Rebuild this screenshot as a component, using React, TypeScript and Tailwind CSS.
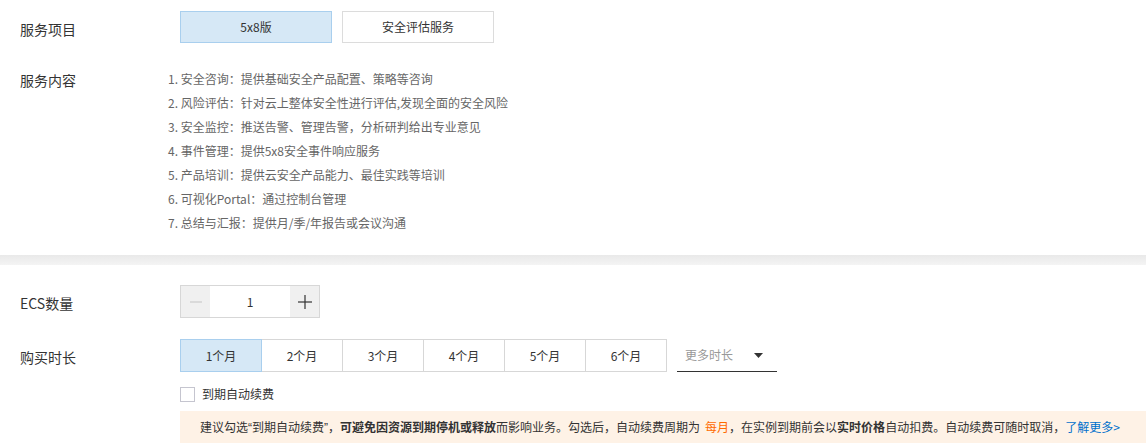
const font = { fontFamily: '"Noto Sans CJK SC", "Liberation Sans", sans-serif' };
const latin = { fontFamily: '"Liberation Sans", sans-serif' };

const services = [
  '1. 安全咨询：提供基础安全产品配置、策略等咨询',
  '2. 风险评估：针对云上整体安全性进行评估,发现全面的安全风险',
  '3. 安全监控：推送告警、管理告警，分析研判给出专业意见',
  '4. 事件管理：提供5x8安全事件响应服务',
  '5. 产品培训：提供云安全产品能力、最佳实践等培训',
  '6. 可视化Portal：通过控制台管理',
  '7. 总结与汇报：提供月/季/年报告或会议沟通',
];

const durations = ['1个月', '2个月', '3个月', '4个月', '5个月', '6个月'];

export default function App() {
  return (
    <div className="w-[1146px] h-[447px] bg-white text-[#333] overflow-hidden" style={font}>
      {/* Service section */}
      <div className="pt-[11px] h-[255px]">
        <div className="flex items-center">
          <div className="w-[180px] pl-5 pt-[4px] text-[14px] leading-[20px]">服务项目</div>
          <div className="flex gap-[10px]">
            <button className="w-[152px] h-[32px] bg-[#d6e8f6] border border-[#a9cfee] text-[12px] text-[#333]">
              5x8版
            </button>
            <button className="w-[152px] h-[32px] bg-white border border-[#dcdcdc] text-[12px] text-[#333]">
              安全评估服务
            </button>
          </div>
        </div>

        <div className="flex items-start mt-[24px]">
          <div className="w-[168px] pl-5 pt-[3px] text-[14px] leading-[20px]">服务内容</div>
          <ul className="text-[12px] leading-[24px] text-[#666]">
            {services.map((s) => (
              <li key={s}>{s}</li>
            ))}
          </ul>
        </div>
      </div>

      {/* Divider */}
      <div className="h-[10px] bg-gradient-to-b from-[#e9e9e9] to-[#f4f4f4]" />

      {/* Purchase section */}
      <div className="pt-[20px]">
        <div className="flex items-center">
          <div className="w-[180px] pl-5 pt-[2px] text-[14px] leading-[20px]">ECS数量</div>
          <div className="flex h-[33px] w-[140px] border border-[#d7d7d7]">
            <div className="w-[29px] bg-[#f0f0f0] flex items-center justify-center">
              <svg width="12" height="12" viewBox="0 0 12 12">
                <line x1="0" y1="6" x2="12" y2="6" stroke="#c4c4c4" strokeWidth="1" />
              </svg>
            </div>
            <div className="flex-1 bg-white flex items-center justify-center text-[12px]">1</div>
            <div className="w-[29px] bg-[#f0f0f0] flex items-center justify-center">
              <svg width="14" height="14" viewBox="0 0 14 14">
                <line x1="0" y1="7" x2="14" y2="7" stroke="#333" strokeWidth="1.2" />
                <line x1="7" y1="0" x2="7" y2="14" stroke="#333" strokeWidth="1.2" />
              </svg>
            </div>
          </div>
        </div>

        <div className="flex items-center mt-[21px]">
          <div className="w-[180px] pl-5 pt-[2px] text-[14px] leading-[20px]">购买时长</div>
          <div className="flex h-[33px]">
            {durations.map((d, i) => (
              <div
                key={d}
                className={
                  i === 0
                    ? 'w-[82px] h-full flex items-center justify-center text-[12px] bg-[#d6e8f6] border border-[#a9cfee]'
                    : 'w-[81px] h-full flex items-center justify-center text-[12px] bg-white border-y border-r border-[#d7d7d7]'
                }
              >
                {d}
              </div>
            ))}
          </div>
          <div className="ml-[10px] w-[100px] h-[33px] flex items-center justify-between pl-[8px] pr-[14px] border-b border-[#333]">
            <span className="text-[12px] text-[#999]">更多时长</span>
            <svg width="9" height="5" viewBox="0 0 9 5">
              <polygon points="0,0 9,0 4.5,5" fill="#333" />
            </svg>
          </div>
        </div>

        <div className="flex items-center ml-[180px] mt-[14px] h-[16px]">
          <div className="w-[15px] h-[15px] border border-[#c5c5cf] bg-white" />
          <span className="ml-[7px] text-[12px]">到期自动续费</span>
        </div>

        <div className="ml-[180px] mt-[9px] h-[32px] bg-[#fef2e6] flex items-center pl-[20px] text-[12px] text-[#333] whitespace-nowrap">
          <span>
            建议勾选<span style={latin}>“</span>到期自动续费<span style={latin}>”</span>，
          </span>
          <span className="font-bold">可避免因资源到期停机或释放</span>
          <span>而影响业务。勾选后，自动续费周期为</span>
          <span className="ml-[5px] text-[#ff6a00]">每月</span>
          <span>，在实例到期前会以</span>
          <span className="font-bold">实时价格</span>
          <span>自动扣费。自动续费可随时取消，</span>
          <span className="text-[#0070cc]">了解更多&gt;</span>
        </div>
      </div>
    </div>
  );
}
